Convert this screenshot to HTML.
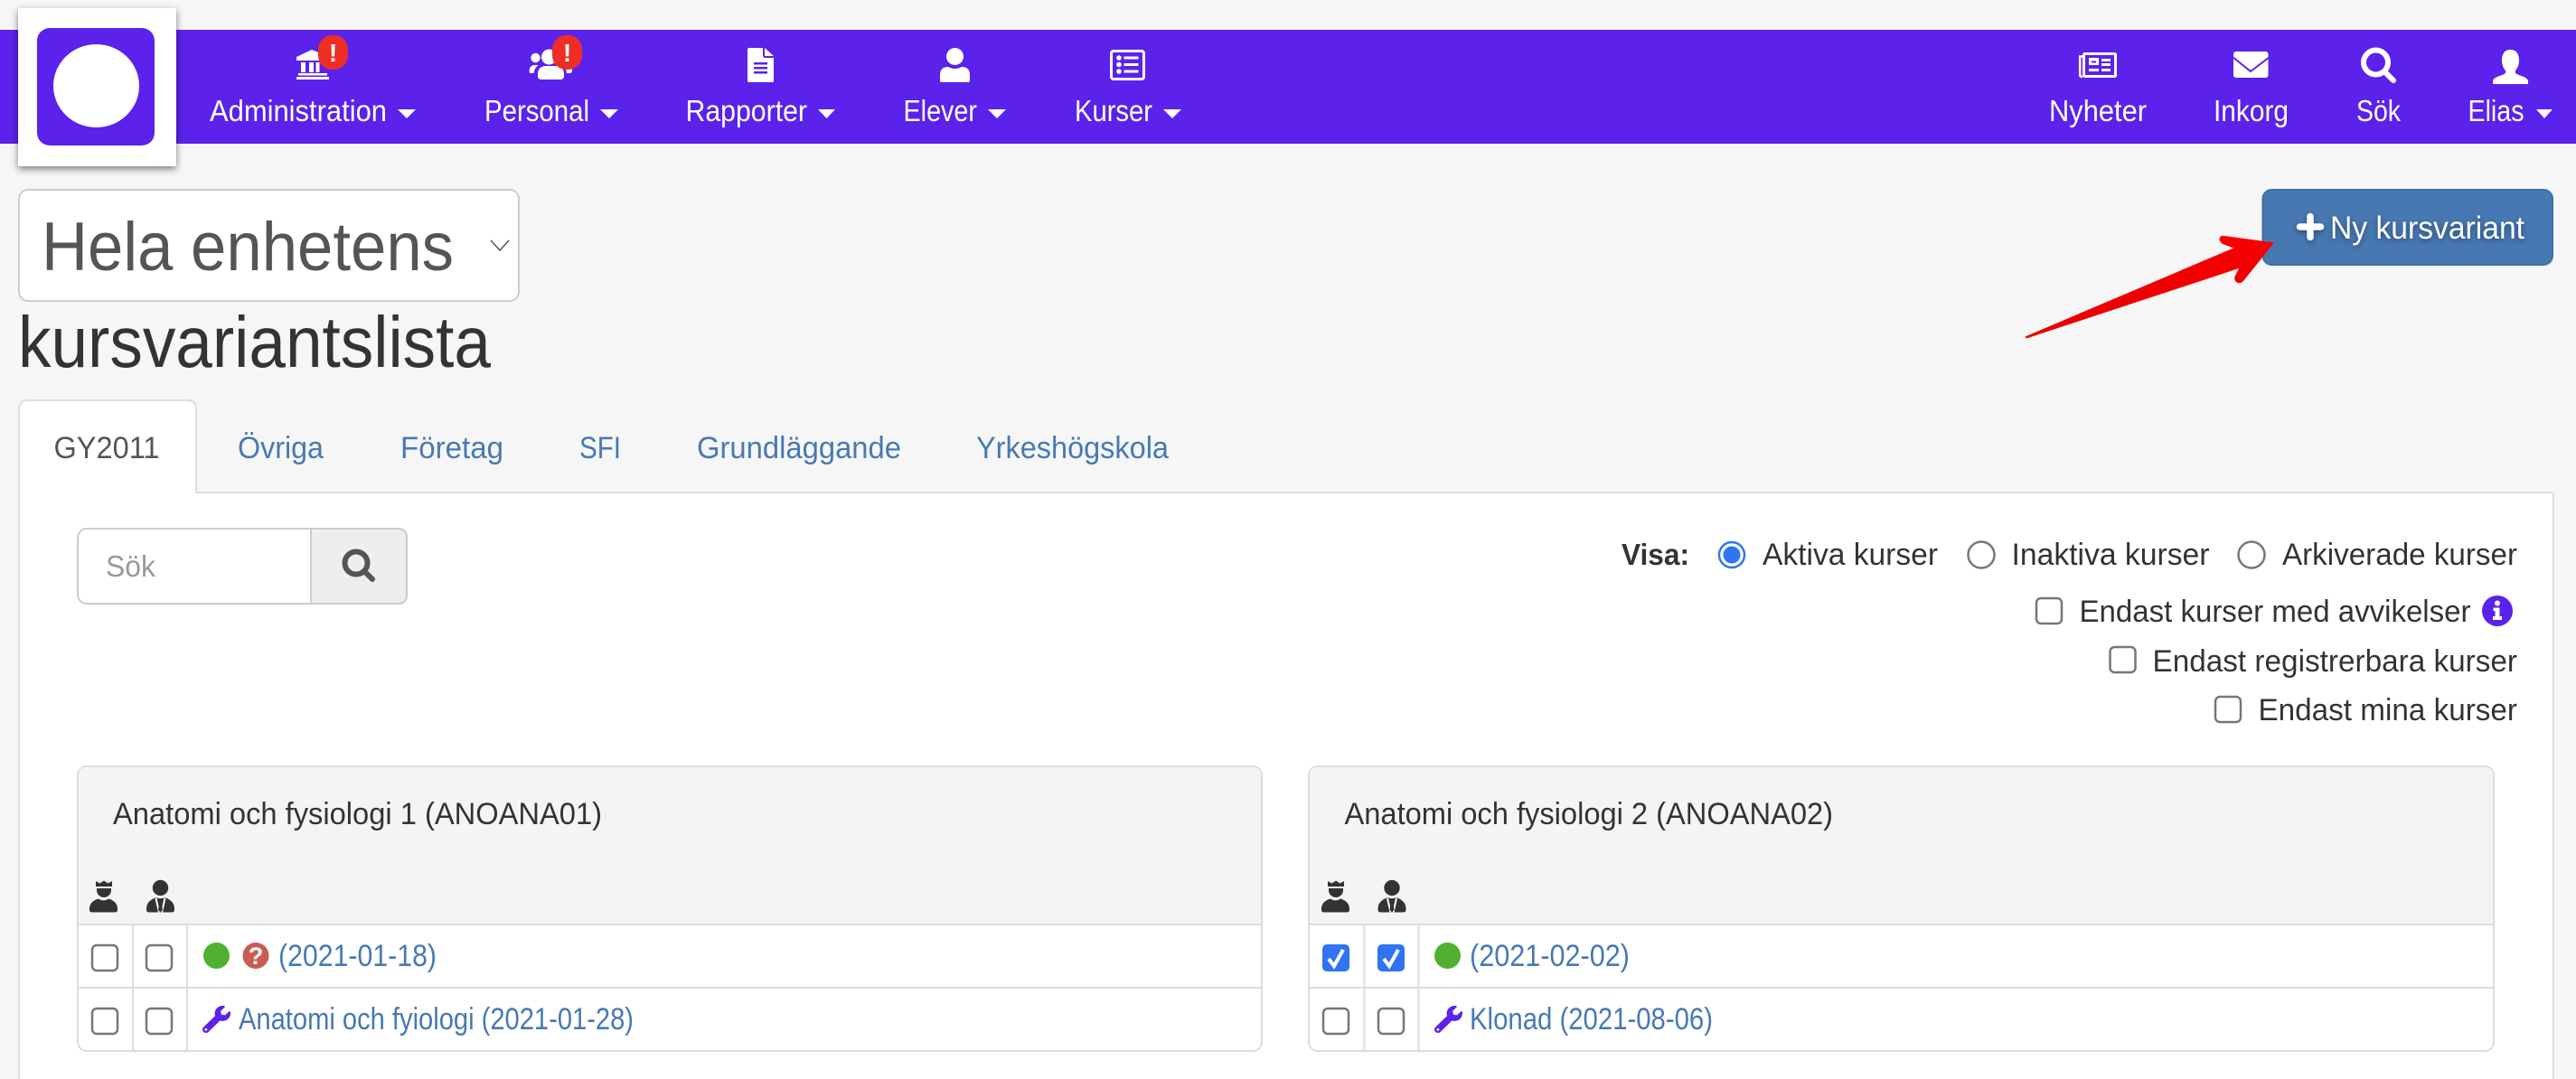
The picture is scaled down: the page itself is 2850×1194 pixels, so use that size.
<!DOCTYPE html>
<html lang="sv">
<head>
<meta charset="utf-8">
<title>Kursvariantslista</title>
<style>
html,body{margin:0;padding:0;background:#f6f6f6;width:2850px;height:1194px;overflow:hidden}
svg{display:block}
text{font-family:"Liberation Sans",sans-serif}
.n{fill:#fff;font-size:33px}
.l{fill:#4779b4;font-size:34px}
.d{fill:#333;font-size:34px}
.cb{fill:#fff;stroke:#777;stroke-width:2.5}
.bd{fill:none;stroke:#ddd;stroke-width:2}
</style>
</head>
<body>
<svg width="2850" height="1194" viewBox="0 0 2850 1194" xmlns="http://www.w3.org/2000/svg">
<defs>
<filter id="sh" x="-20%" y="-20%" width="140%" height="140%"><feDropShadow dx="0" dy="3" stdDeviation="4" flood-color="#000" flood-opacity=".5"/></filter>
<linearGradient id="ar" x1="0" y1="0" x2="0.3" y2="1"><stop offset="0" stop-color="#ff0000"/><stop offset="1" stop-color="#e60000"/></linearGradient>
<path id="wr" d="M507.73 109.1c-2.24-9.03-13.54-12.09-20.12-5.51l-74.36 74.36-67.88-11.31-11.31-67.88 74.36-74.36c6.62-6.62 3.43-17.9-5.66-20.16-47.38-11.74-99.55.91-136.58 37.93-39.64 39.64-50.55 97.1-34.05 147.2L18.74 402.76c-24.99 24.99-24.99 65.51 0 90.5 24.99 24.99 65.51 24.99 90.5 0l213.21-213.21c50.12 16.71 107.47 5.68 147.37-34.22 37.07-37.07 49.7-89.32 37.91-136.73zM64 472c-13.25 0-24-10.75-24-24 0-13.26 10.75-24 24-24s24 10.74 24 24c0 13.25-10.75 24-24 24z"/>
<g id="crown" fill="#333"><path d="M7 1L11.500 3.500L16 .5L20.500 3.500L25 1V7H7Z"/><path d="M8 9H24V11C24 16 20 19 16 19S8 16 8 11Z"/><path d="M0 32C0 25 5 22 10 20.500C13 23 18 23 21 20.500C26 22 31 25 31 32V33Q31 35.500 28 35.500H3Q0 35.500 0 33Z"/></g>
<g id="suit"><circle cx="15.500" cy="8.500" r="8.700" fill="#333"/><path d="M0 32C0 25 4 22 9.500 19.500H21.500C27 22 31 25 31 32V33Q31 35.500 28 35.500H3Q0 35.500 0 33Z" fill="#333"/><path d="M10.500 20L14 35.500M20.500 20L17 35.500" stroke="#fff" stroke-width="2" fill="none"/><path d="M13.500 20H17.500L16.700 24L18 33L15.500 35.500L13 33L14.300 24Z" fill="#333"/><path d="M12.500 19.500H18.500" stroke="#fff" stroke-width="1.200"/></g>
</defs>

<!-- nav -->
<rect x="0" y="33" width="2850" height="126" fill="#5a22ea"/>
<rect x="20" y="9" width="175" height="175" fill="#fff" filter="url(#sh)"/>
<rect x="41" y="31" width="130" height="130" rx="14" fill="#5a22ea"/>
<ellipse cx="106.500" cy="95" rx="47.500" ry="46" fill="#fff"/>

<!-- bank -->
<g fill="#fff"><path d="M345 55L360 61V67H328V63Z"/><rect x="333" y="69" width="5" height="11"/><rect x="342" y="69" width="5" height="11"/><rect x="349.500" y="69" width="4" height="11"/><rect x="330" y="81" width="32" height="2.500"/><rect x="328" y="85" width="36" height="3"/></g>
<rect x="352" y="39" width="33" height="38" rx="15.500" fill="#ee2e24"/>
<text x="368.500" y="68" font-size="28" font-weight="700" fill="#fff" text-anchor="middle">!</text>
<text class="n" x="232" y="134" textLength="196" lengthAdjust="spacingAndGlyphs">Administration</text>
<path d="M440 121H460L450 131Z" fill="#fff"/>

<!-- users -->
<g fill="#fff"><circle cx="592.500" cy="64" r="5.200"/><path d="M586 81Q584.500 74 590 72H595.500Q591.500 75 590.500 81Z"/><circle cx="607.500" cy="63" r="8.500"/><path d="M595 84V82C595 76 599 73 604 73H615C620 73 624 76 624 82V84Q624 88 620 88H599Q595 88 595 84Z"/><path d="M626 75H633V78C633 80 632 81 630 81H627Z"/></g>
<rect x="611" y="39" width="33" height="38" rx="15.500" fill="#ee2e24"/>
<text x="627.500" y="68" font-size="28" font-weight="700" fill="#fff" text-anchor="middle">!</text>
<text class="n" x="536" y="134" textLength="116" lengthAdjust="spacingAndGlyphs">Personal</text>
<path d="M664 121H684L674 131Z" fill="#fff"/>

<!-- doc -->
<path d="M829 53H844V61Q844 64 847 64H856V89Q856 91 854 91H829Q827 91 827 89V55Q827 53 829 53Z" fill="#fff"/>
<path d="M846 53L856 62H846Z" fill="#fff"/>
<g fill="#5a22ea"><rect x="834" y="69" width="15" height="2.500"/><rect x="834" y="74" width="15" height="2.500"/><rect x="834" y="79" width="15" height="2.500"/></g>
<text class="n" x="758.500" y="134" textLength="134.500" lengthAdjust="spacingAndGlyphs">Rapporter</text>
<path d="M905 121H924L914.500 131Z" fill="#fff"/>

<!-- person -->
<ellipse cx="1056.500" cy="62.500" rx="9.500" ry="9.500" fill="#fff"/>
<path d="M1040 89V83Q1040 74 1049 74Q1056.500 78 1064 74Q1073 74 1073 83V89Q1073 91 1071 91H1042Q1040 91 1040 89Z" fill="#fff"/>
<text class="n" x="999.500" y="134" textLength="81.500" lengthAdjust="spacingAndGlyphs">Elever</text>
<path d="M1093 121H1113L1103 131Z" fill="#fff"/>

<!-- list -->
<rect x="1229.500" y="56.500" width="36" height="31" rx="2.500" fill="none" stroke="#fff" stroke-width="3"/>
<g fill="#fff"><circle cx="1238" cy="64" r="2.800"/><circle cx="1238" cy="71.500" r="2.800"/><circle cx="1238" cy="79" r="2.800"/><rect x="1243.500" y="62.500" width="16" height="3"/><rect x="1243.500" y="70" width="16" height="3"/><rect x="1243.500" y="77.500" width="16" height="3"/></g>
<text class="n" x="1189" y="134" textLength="86" lengthAdjust="spacingAndGlyphs">Kurser</text>
<path d="M1287 121H1307L1297 131Z" fill="#fff"/>

<!-- news -->
<rect x="2305.500" y="59.500" width="35" height="25" rx="1" fill="none" stroke="#fff" stroke-width="3"/>
<path d="M2304 62.500H2301.200V83Q2301.200 85 2304 85" fill="none" stroke="#fff" stroke-width="2.500"/>
<g fill="#fff"><path fill-rule="evenodd" d="M2311 64H2322V72H2311ZM2314 67.500V69.500H2319V67.500Z"/><rect x="2325" y="65" width="10" height="3"/><rect x="2325" y="70" width="10" height="3"/><rect x="2311" y="76" width="11" height="3"/><rect x="2325" y="76" width="10" height="3"/></g>
<text class="n" x="2267" y="134" textLength="108" lengthAdjust="spacingAndGlyphs">Nyheter</text>

<!-- envelope -->
<rect x="2471" y="57" width="38.500" height="29" rx="3" fill="#fff"/>
<path d="M2470 63L2490 79L2511 63" fill="none" stroke="#5a22ea" stroke-width="2"/>
<text class="n" x="2449" y="134" textLength="83" lengthAdjust="spacingAndGlyphs">Inkorg</text>

<!-- search -->
<circle cx="2628.500" cy="69" r="13.500" fill="none" stroke="#fff" stroke-width="6"/>
<path d="M2639 80L2648 89" stroke="#fff" stroke-width="6" stroke-linecap="round"/>
<text class="n" x="2607" y="134" textLength="49" lengthAdjust="spacingAndGlyphs">Sök</text>

<!-- user -->
<path d="M2777.500 55C2770 55 2768 61 2768 67C2768 72 2770 76 2772 78V81C2768 84 2758 85 2758 90V93H2797V90C2797 85 2787 84 2783 81V78C2785 76 2787 72 2787 67C2787 61 2785 55 2777.500 55Z" fill="#fff"/>
<text class="n" x="2730.500" y="134" textLength="62" lengthAdjust="spacingAndGlyphs">Elias</text>
<path d="M2806 121H2824L2815 131Z" fill="#fff"/>

<!-- select -->
<rect x="21" y="210" width="553" height="123" rx="10" fill="#fff" stroke="#ccc" stroke-width="2"/>
<text x="46" y="299" font-size="76" fill="#555" textLength="456" lengthAdjust="spacingAndGlyphs">Hela enhetens</text>
<path d="M543 266L553 277L563 266" fill="none" stroke="#555" stroke-width="1.500"/>
<text x="20" y="406" font-size="80" fill="#333" textLength="523" lengthAdjust="spacingAndGlyphs">kursvariantslista</text>

<!-- button -->
<rect x="2503.500" y="210" width="320.500" height="83" rx="10" fill="#4778b2" stroke="#3f6ea6" stroke-width="2"/>
<path d="M2556 239.500V262.500M2544.500 251H2567.500" stroke="#fff" stroke-width="7.500" stroke-linecap="round" fill="none" style="filter:drop-shadow(0 2px 3px rgba(0,0,0,.4))"/>
<text x="2578" y="264" font-size="35" fill="#fff" textLength="215" lengthAdjust="spacingAndGlyphs" style="filter:drop-shadow(0 2px 3px rgba(0,0,0,.4))">Ny kursvariant</text>

<!-- arrow -->
<path d="M2240.500 372.500L2471 274.500L2459 270Q2454 266 2456 263Q2457 260.500 2461 261L2516 268.500L2482 311Q2478 315 2474 312Q2471 309 2473 305L2477 297L2242 374.500Z" fill="url(#ar)"/>

<!-- tabs & panel -->
<path d="M21 1194V546H2825V1194Z" fill="#fff"/>
<path d="M21 1194V546M2825 546V1194M217 545H2825" class="bd"/>
<path d="M21 546V453Q21 443 31 443H207Q217 443 217 453V546Z" fill="#fff"/>
<path d="M21 546V453Q21 443 31 443H207Q217 443 217 453V546" class="bd"/>
<text x="59.500" y="507" font-size="34" fill="#555" textLength="117" lengthAdjust="spacingAndGlyphs">GY2011</text>
<text class="l" x="263" y="507" textLength="95" lengthAdjust="spacingAndGlyphs">Övriga</text>
<text class="l" x="443" y="507" textLength="114" lengthAdjust="spacingAndGlyphs">Företag</text>
<text class="l" x="641" y="507" textLength="46" lengthAdjust="spacingAndGlyphs">SFI</text>
<text class="l" x="771" y="507" textLength="226" lengthAdjust="spacingAndGlyphs">Grundläggande</text>
<text class="l" x="1080" y="507" textLength="213" lengthAdjust="spacingAndGlyphs">Yrkeshögskola</text>

<!-- search box -->
<rect x="86" y="585" width="364" height="83" rx="10" fill="#fff" stroke="#ccc" stroke-width="2"/>
<path d="M344 585H440Q450 585 450 595V658Q450 668 440 668H344Z" fill="#eee" stroke="#ccc" stroke-width="2"/>
<text x="117" y="638" font-size="33" fill="#999" textLength="55" lengthAdjust="spacingAndGlyphs">Sök</text>
<circle cx="394" cy="623" r="12.500" fill="none" stroke="#555" stroke-width="6"/>
<path d="M404 633L412 641" stroke="#555" stroke-width="6" stroke-linecap="round"/>

<!-- filters -->
<text x="1794" y="625" font-size="33" font-weight="700" fill="#333" textLength="75" lengthAdjust="spacingAndGlyphs">Visa:</text>
<circle cx="1916" cy="614" r="14" fill="#fff" stroke="#2f74f0" stroke-width="2.500"/>
<circle cx="1916" cy="614" r="9.500" fill="#2f74f0"/>
<text class="d" x="1950" y="625" textLength="194" lengthAdjust="spacingAndGlyphs">Aktiva kurser</text>
<circle cx="2192" cy="614" r="14.500" fill="#fff" stroke="#777" stroke-width="2.500"/>
<text class="d" x="2225.500" y="625" textLength="219" lengthAdjust="spacingAndGlyphs">Inaktiva kurser</text>
<circle cx="2491" cy="614" r="14.500" fill="#fff" stroke="#777" stroke-width="2.500"/>
<text class="d" x="2525" y="625" textLength="260" lengthAdjust="spacingAndGlyphs">Arkiverade kurser</text>

<rect class="cb" x="2253" y="662" width="28" height="28" rx="5"/>
<text class="d" x="2300.500" y="688" textLength="433" lengthAdjust="spacingAndGlyphs">Endast kurser med avvikelser</text>
<circle cx="2763" cy="676" r="17" fill="#5a22ea"/>
<g fill="#fff"><circle cx="2763" cy="667.500" r="3"/><path d="M2758.500 672.500H2765.500V682H2768V686H2758V682H2760.500V676H2758.500Z"/></g>

<rect class="cb" x="2334.500" y="716" width="28" height="28" rx="5"/>
<text class="d" x="2381.500" y="743" textLength="403.500" lengthAdjust="spacingAndGlyphs">Endast registrerbara kurser</text>
<rect class="cb" x="2451" y="771" width="28" height="28" rx="5"/>
<text class="d" x="2498.500" y="797" textLength="286.500" lengthAdjust="spacingAndGlyphs">Endast mina kurser</text>

<!-- card 1 -->
<rect x="86" y="848" width="1310" height="315" rx="10" fill="#fff" stroke="#ddd" stroke-width="2"/>
<path d="M87 1023V858Q87 849 96 849H1386Q1395 849 1395 858V1023Z" fill="#f4f4f4"/>
<path d="M86 1023H1396M86 1093H1396M147 1023V1163M207 1023V1163" class="bd"/>
<text class="d" x="125" y="912" textLength="541" lengthAdjust="spacingAndGlyphs">Anatomi och fysiologi 1 (ANOANA01)</text>
<use href="#crown" x="99" y="974"/>
<use href="#suit" x="162" y="974"/>
<rect class="cb" x="102" y="1046" width="28" height="28" rx="5"/>
<rect class="cb" x="162" y="1046" width="28" height="28" rx="5"/>
<rect class="cb" x="102" y="1116" width="28" height="28" rx="5"/>
<rect class="cb" x="162" y="1116" width="28" height="28" rx="5"/>
<circle cx="239.500" cy="1057.500" r="14.500" fill="#4fb032"/>
<circle cx="283" cy="1057.500" r="14.500" fill="#ca5c54"/>
<text x="283" y="1067" font-size="27" font-weight="700" fill="#fff" text-anchor="middle">?</text>
<text class="l" x="308" y="1069" textLength="175" lengthAdjust="spacingAndGlyphs">(2021-01-18)</text>
<use href="#wr" transform="translate(224 1113) scale(.0605 .0586)" fill="#5a22ea"/>
<text class="l" x="264" y="1139" textLength="437" lengthAdjust="spacingAndGlyphs">Anatomi och fyiologi (2021-01-28)</text>

<!-- card 2 -->
<rect x="1448" y="848" width="1311" height="315" rx="10" fill="#fff" stroke="#ddd" stroke-width="2"/>
<path d="M1449 1023V858Q1449 849 1458 849H2749Q2758 849 2758 858V1023Z" fill="#f4f4f4"/>
<path d="M1448 1023H2759M1448 1093H2759M1509.500 1023V1163M1569.500 1023V1163" class="bd"/>
<text class="d" x="1487.500" y="912" textLength="540.500" lengthAdjust="spacingAndGlyphs">Anatomi och fysiologi 2 (ANOANA02)</text>
<use href="#crown" x="1462" y="974"/>
<use href="#suit" x="1524.500" y="974"/>
<rect x="1463" y="1045" width="30" height="30" rx="5" fill="#2f74f0"/>
<rect x="1524" y="1045" width="30" height="30" rx="5" fill="#2f74f0"/>
<path d="M1470 1061L1476 1069L1486 1051" fill="none" stroke="#fff" stroke-width="4"/>
<path d="M1531 1061L1537 1069L1547 1051" fill="none" stroke="#fff" stroke-width="4"/>
<rect class="cb" x="1464" y="1116" width="28" height="28" rx="5"/>
<rect class="cb" x="1525" y="1116" width="28" height="28" rx="5"/>
<circle cx="1601.500" cy="1057.500" r="14.500" fill="#4fb032"/>
<text class="l" x="1626" y="1069" textLength="177" lengthAdjust="spacingAndGlyphs">(2021-02-02)</text>
<use href="#wr" transform="translate(1587 1113) scale(.0605 .0586)" fill="#5a22ea"/>
<text class="l" x="1626" y="1139" textLength="269" lengthAdjust="spacingAndGlyphs">Klonad (2021-08-06)</text>
</svg>
</body>
</html>
